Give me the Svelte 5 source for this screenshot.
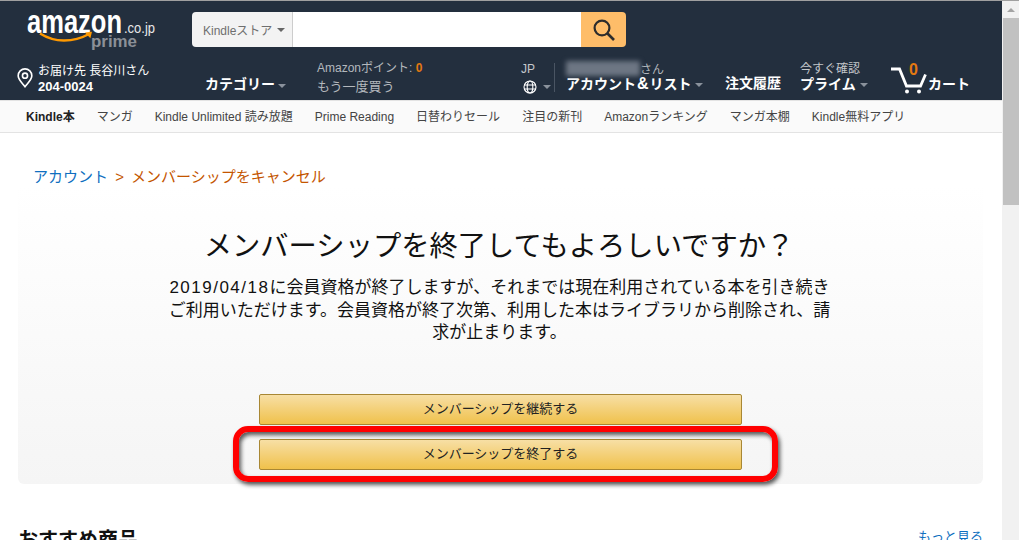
<script lang="ts">
  const navItems = [
    "Kindle本",
    "マンガ",
    "Kindle Unlimited 読み放題",
    "Prime Reading",
    "日替わりセール",
    "注目の新刊",
    "Amazonランキング",
    "マンガ本棚",
    "Kindle無料アプリ",
  ];
</script>

<div class="window">
  <div class="page">
    <header class="header">
      <div class="top-row">
        <svg class="logo" width="135" height="42" viewBox="0 0 135 42">
          <text class="logo-word" x="0" y="22" textLength="95" lengthAdjust="spacingAndGlyphs">amazon</text>
          <text class="logo-tld" x="97" y="22" textLength="31" lengthAdjust="spacingAndGlyphs">.co.jp</text>
          <text class="logo-prime" x="64" y="36" textLength="46" lengthAdjust="spacingAndGlyphs">prime</text>
          <path d="M13 22.500c8 5 15 7 24 7 9 0 17-2 25-6.500" fill="none" stroke="#f90" stroke-width="2.400" />
          <path d="M58 21.500l7-.7-1.600 6.500z" fill="#f90" />
        </svg>
        <div class="search">
          <div class="search-scope">Kindleストア <i class="caret"></i></div>
          <div class="search-input"></div>
          <div class="search-btn">
            <svg width="24" height="24" viewBox="0 0 24 24" fill="none" stroke="#2c2c2c" stroke-width="2.200">
              <circle cx="10" cy="10" r="7.400" />
              <path d="M15.500 15.500L22 22" stroke-width="2.600" />
            </svg>
          </div>
        </div>
      </div>

      <div class="bottom-row">
        <div class="address">
          <svg width="18" height="20" viewBox="0 0 18 22" fill="none" stroke="#fff" stroke-width="1.800">
            <path d="M9 20.500C5 15.500 1.500 12.500 1.500 8.500a7.500 7.500 0 0 1 15 0c0 4-3.500 7-7.500 12z" />
            <circle cx="9" cy="8.500" r="2.800" />
          </svg>
          <div>
            <div class="addr-line1">お届け先 長谷川さん</div>
            <div class="addr-line2">204-0024</div>
          </div>
        </div>

        <div class="cat"><span class="strong">カテゴリー</span> <i class="caret dim"></i></div>

        <div class="points">
          <div class="pts-line1">Amazonポイント: <b>0</b></div>
          <div class="pts-line2">もう一度買う</div>
        </div>

        <div class="lang">
          <div class="lang-code">JP</div>
          <div class="lang-icon">
            <svg width="14" height="14" viewBox="0 0 14 14" fill="none" stroke="#fff" stroke-width="1.100">
              <circle cx="7" cy="7" r="6" />
              <ellipse cx="7" cy="7" rx="2.800" ry="6" />
              <path d="M1 5h12M1 9h12" />
            </svg>
            <i class="caret dim"></i>
          </div>
        </div>

        <div class="account">
          <div class="acct-line1"><span class="blurred"></span><span>さん</span></div>
          <div class="strong">アカウント<span class="amp">&amp;</span>リスト <i class="caret dim"></i></div>
        </div>

        <div class="orders strong">注文履歴</div>

        <div class="prime">
          <div class="prime-line1">今すぐ確認</div>
          <div class="strong">プライム <i class="caret dim"></i></div>
        </div>

        <div class="cart">
          <svg width="40" height="28" viewBox="0 0 40 28" fill="none" stroke="#fff">
            <path d="M1 2h8.500l7 17h14l5-11.500" stroke-width="2.800" />
            <circle cx="17" cy="24.500" r="2" fill="#fff" stroke="none" />
            <circle cx="29" cy="24.500" r="2" fill="#fff" stroke="none" />
          </svg>
          <span class="cart-count">0</span>
          <span class="cart-label strong">カート</span>
        </div>
      </div>
    </header>

    <nav class="subnav">
      {#each navItems as item, i}
        <span class:first={i === 0}>{item}</span>
      {/each}
    </nav>

    <main class="main">
      <div class="crumbs">
        <span class="crumb-link">アカウント</span>
        <span class="crumb-current"><span class="sep">&gt;</span>メンバーシップをキャンセル</span>
      </div>

      <section class="panel">
        <h1>メンバーシップを終了してもよろしいですか？</h1>
        <p><span class="date">2019/04/18</span>に会員資格が終了しますが、それまでは現在利用されている本を引き続き<br />ご利用いただけます。会員資格が終了次第、利用した本はライブラリから削除され、請<br />求が止まります。</p>
        <div class="actions">
          <button>メンバーシップを継続する</button>
          <button>メンバーシップを終了する</button>
          <div class="highlight"></div>
        </div>
      </section>

      <div class="recs">
        <h2>おすすめ商品</h2>
        <span class="more">もっと見る</span>
      </div>
    </main>
  </div>

  <div class="scrollbar">
    <div class="arrow"></div>
    <div class="thumb"></div>
  </div>
</div>

<style>
  :global(body) {
    margin: 0;
    background: #fff;
    font-family: "Liberation Sans", "Noto Sans CJK JP", sans-serif;
  }

  .window {
    display: flex;
    width: 1019px;
    height: 540px;
    overflow: hidden;
    border-top: 1px solid #a0a0a0;
    box-sizing: border-box;
  }

  .page {
    width: 1002px;
    flex: none;
  }

  /* ── Header ── */

  .header {
    height: 99px;
    background: #232f3e;
    color: #fff;
  }

  .top-row {
    display: flex;
    height: 59px;
  }

  .logo {
    margin: 10px 0 0 27px;
    flex: none;
  }

  .logo-word {
    font-size: 34px;
    font-weight: 700;
    fill: #fff;
  }

  .logo-tld {
    font-size: 14px;
    fill: #e8e8e8;
  }

  .logo-prime {
    font-size: 17px;
    font-weight: 700;
    fill: #8b9097;
  }

  .search {
    display: flex;
    width: 434px;
    height: 35px;
    margin: 11px 0 0 30px;
    border-radius: 4px;
    overflow: hidden;
  }

  .search-scope {
    width: 101px;
    box-sizing: border-box;
    display: flex;
    align-items: center;
    gap: 5px;
    padding-left: 11px;
    background: #f3f3f3;
    border-right: 1px solid #cdcdcd;
    color: #6f6f6f;
    font-size: 12px;
  }

  .search-input {
    flex: 1;
    background: #fff;
  }

  .search-btn {
    width: 45px;
    display: flex;
    align-items: center;
    justify-content: center;
    background: #febd69;
  }

  .caret {
    display: inline-block;
    width: 0;
    height: 0;
    border: 4px solid transparent;
    border-top-color: #666;
    border-bottom-width: 0;
    vertical-align: middle;
  }

  .caret.dim {
    border-top-color: #8a929c;
  }

  .bottom-row {
    display: flex;
    height: 40px;
    font-size: 12px;
  }

  .strong {
    font-size: 14px;
    font-weight: 700;
    line-height: 18px;
    white-space: nowrap;
  }

  .amp {
    font-size: 16px;
    margin: 0 1px;
  }

  .address {
    width: 205px;
    flex: none;
    display: flex;
    gap: 4px;
    padding: 8px 0 0 16px;
    box-sizing: border-box;
  }

  .addr-line1 {
    font-size: 12px;
    line-height: 15px;
    margin-top: -4px;
  }

  .addr-line2 {
    font-size: 13px;
    font-weight: 700;
    line-height: 15px;
  }

  .cat {
    width: 112px;
    flex: none;
    padding-top: 15px;
    box-sizing: border-box;
  }

  .points {
    width: 204px;
    flex: none;
    color: #b4b8bd;
    font-size: 12px;
  }

  .pts-line1 {
    line-height: 15px;
    margin-top: 1px;
  }

  .pts-line1 b {
    color: #e47911;
  }

  .pts-line2 {
    font-size: 13px;
    line-height: 18px;
    margin-top: 2px;
  }

  .lang {
    width: 45px;
    flex: none;
    color: #c4c7cb;
    position: relative;
  }

  .lang::after {
    content: "";
    position: absolute;
    left: 33px;
    top: 3px;
    height: 29px;
    border-left: 1px solid #4a5563;
  }

  .lang-code {
    line-height: 14px;
    margin-top: 2px;
  }

  .lang-icon {
    display: flex;
    align-items: center;
    gap: 6px;
    margin-top: 4px;
    margin-left: 2px;
  }

  .account {
    width: 159px;
    flex: none;
  }

  .acct-line1 {
    display: flex;
    height: 15px;
    color: #b4b8bd;
    font-size: 12px;
    line-height: 20px;
  }

  .blurred {
    width: 74px;
    height: 15px;
    margin-top: 1px;
    background: #6d7683;
    filter: blur(2.500px);
  }

  .orders {
    width: 75px;
    flex: none;
    padding-top: 14px;
  }

  .prime {
    width: 90px;
    flex: none;
    color: #c4c7cb;
  }

  .prime .strong {
    color: #fff;
    margin-top: -1px;
  }

  .prime-line1 {
    line-height: 13px;
    margin-top: 3px;
  }

  .cart {
    position: relative;
    display: flex;
    align-items: flex-end;
    height: 32px;
    margin-top: 3px;
  }

  .cart-count {
    position: absolute;
    left: 19px;
    top: -2px;
    color: #e47911;
    font-size: 16px;
    font-weight: 700;
  }

  .cart-label {
    margin: 0 0 2px -2px;
  }

  /* ── Subnav ── */

  .subnav {
    display: flex;
    gap: 22px;
    height: 33px;
    box-sizing: border-box;
    align-items: center;
    padding-left: 26px;
    background: #fafafa;
    border-top: 1px solid #e3e3e3;
    border-bottom: 1px solid #e3e3e3;
    color: #444;
    font-size: 12px;
    line-height: 16px;
    white-space: nowrap;
  }

  .subnav .first {
    font-weight: 700;
    color: #222;
  }

  /* ── Main ── */

  .main {
    padding: 0 19px 0 18px;
  }

  .crumbs {
    padding: 34px 0 0 15px;
    height: 53px;
    box-sizing: border-box;
    font-size: 15px;
    line-height: 20px;
  }

  .crumb-link {
    color: #0f6fc0;
  }

  .crumb-current {
    color: #c45500;
  }

  .sep {
    margin: 0 7px 0 3px;
  }

  .panel {
    height: 298px;
    box-sizing: border-box;
    padding-top: 42px;
    text-align: center;
    border-radius: 0 0 6px 6px;
    background: linear-gradient(#fff, #f5f5f5);
  }

  h1 {
    margin: 0;
    padding-right: 3px;
    font-size: 28.300px;
    font-weight: 400;
    line-height: 36px;
    color: #111;
  }

  p {
    width: 680px;
    margin: 13px auto 0;
    padding-right: 2px;
    font-size: 17px;
    line-height: 22.500px;
    color: #111;
  }

  .date {
    letter-spacing: 1.500px;
  }

  .actions {
    position: relative;
    display: flex;
    flex-direction: column;
    align-items: center;
    gap: 14px;
    margin-top: 49px;
  }

  button {
    width: 483px;
    height: 31px;
    padding: 0 0 3px;
    font: inherit;
    font-size: 13px;
    color: #222;
    border: 1px solid #a88734;
    border-radius: 2px;
    background: linear-gradient(#f7dfa5, #f0c14b);
  }

  .highlight {
    position: absolute;
    left: 215px;
    top: 32px;
    width: 545px;
    height: 56px;
    box-sizing: border-box;
    border: 6px solid #f00;
    border-radius: 15px;
    box-shadow: 2px 3px 4px rgba(0, 0, 0, 0.65), inset 2px 3px 4px rgba(0, 0, 0, 0.65);
  }

  .recs {
    display: flex;
    justify-content: space-between;
    padding-top: 43px;
  }

  h2 {
    margin: 0;
    font-size: 20px;
    line-height: 26px;
    font-weight: 700;
    color: #111;
  }

  .more {
    color: #0f6fc0;
    font-size: 13px;
    line-height: 20px;
  }

  /* ── Scrollbar ── */

  .scrollbar {
    width: 17px;
    flex: none;
    background: #f1f1f1;
  }

  .arrow {
    width: 0;
    height: 0;
    margin: 7px auto 6px;
    border: 4px solid transparent;
    border-bottom: 4px solid #a3a3a3;
    border-top-width: 0;
  }

  .thumb {
    height: 187px;
    margin-left: 1px;
    background: #c1c1c1;
  }
</style>
